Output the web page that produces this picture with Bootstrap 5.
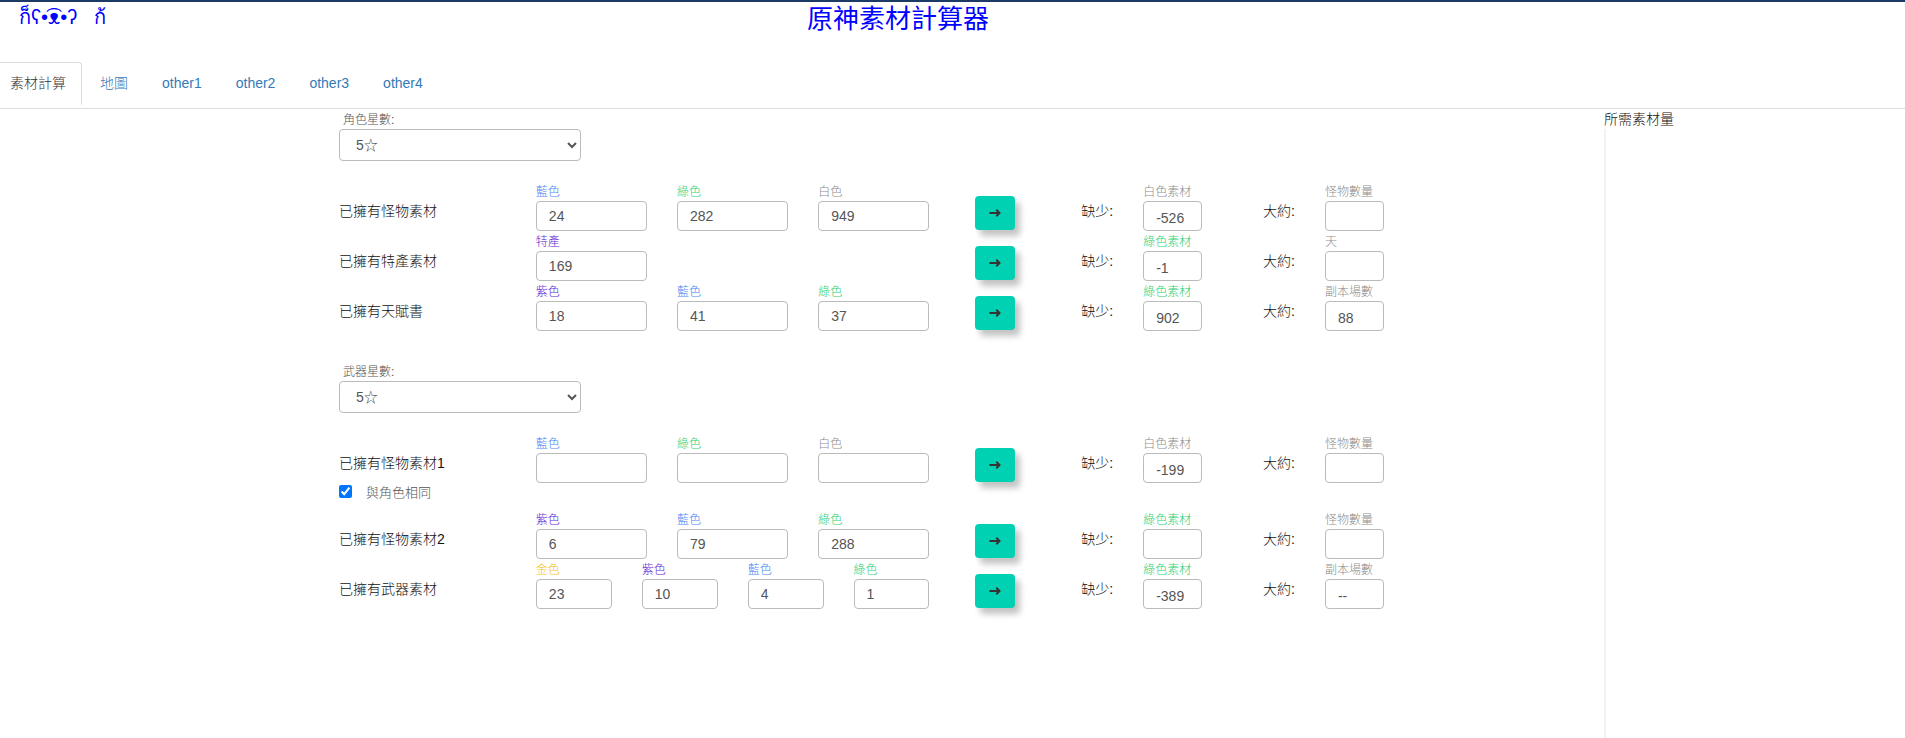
<!DOCTYPE html>
<html lang="zh-Hant">
<head>
<meta charset="utf-8">
<meta name="viewport" content="width=device-width, initial-scale=1">
<title>原神素材計算器</title>
<link href="https://cdn.jsdelivr.net/npm/bootstrap@5.3.0/dist/css/bootstrap.min.css" rel="stylesheet">
<style>
body{font-family:"Liberation Sans","Noto Sans CJK TC",sans-serif;font-size:14px;font-weight:300;line-height:20px;color:#111;border-top:2px solid #1c3a66;background:#fff}
.site-head{display:grid;grid-template-columns:807fr 1098fr;height:60px;color:#00f}
.site-head a{color:#00f;text-decoration:none;font-size:20px;font-weight:400;line-height:30px;padding-left:19px}
.site-head h1{font-size:26px;line-height:34px;margin:0}
.nav-tabs{--bs-nav-tabs-border-color:#ddd;--bs-nav-tabs-border-radius:4px;--bs-nav-tabs-link-active-color:#555;gap:2px;padding-bottom:3px}
.nav-tabs .nav-link{padding:10px 15px 11px;color:#337ab7;margin:0}
.nav-tabs .nav-link.active{color:#333;padding-left:10px;border-left:0;border-top-left-radius:0;border-color:#ddd #ddd #fff}
.layout{display:grid;grid-template-columns:1265fr 301fr;padding-left:17.8%;min-height:calc(100vh - 109px)}
.calc{width:82.6%}
.weapon{padding-top:30px}
.star-label{display:block;height:20px;font-size:12px;line-height:22px;color:#555;padding-left:4px}
.star-select{width:242px;height:32px;padding:4px 12px;font-size:14px;line-height:20px;color:#555;border:1px solid #bbb;border-radius:4px;appearance:auto;background:#fff}
.mat-row{display:grid;grid-template-columns:197fr 394fr 46fr 106fr 62fr 59fr 61fr 62fr 59fr}
.mat-row>*{min-width:0}
.caption{padding-top:20px;white-space:nowrap}
.go-cell{grid-column:4;padding-top:15px}
.fields{display:grid;grid-template-columns:repeat(3,1fr);column-gap:30px}
.fields.four{grid-template-columns:repeat(4,1fr)}
.field label{display:block;height:20px;font-size:12px;line-height:22px;white-space:nowrap}
.field .form-control{height:30px;min-height:30px;padding:0 12px;font-size:14px;line-height:20px;color:#555;border:1px solid #bbb;border-radius:4px}
.field .result{padding-top:4px;background:#fff}
.approx{grid-column:8}
.btn-go{display:flex;align-items:center;justify-content:center;width:40px;height:34px;padding:0;border:0;border-radius:4px;background:#00d1b2;box-shadow:5px 6px 6px rgba(0,0,0,.24);color:#333}
.btn-go:hover{background:#00c4a7}
.c-blue{color:#4a83f5}.c-green{color:#1fd070}.c-white{color:#8c8c8c}.c-purple{color:#5c25d8}.c-gold{color:#f2bf10}
.same-row{height:26px;font-size:13px;color:#555}
.same-row input{width:13px;height:13px;margin:2px 14px 0 0;accent-color:#0075ff}
.side-line{border-left:2px solid #f2f2f2}
</style>
</head>
<body>
<header class="site-head">
  <a href="#">ก็ʕ•͡ᴥ•ʔ&nbsp;&nbsp; ก้</a>
  <h1 class="fw-normal">原神素材計算器</h1>
</header>
<ul class="nav nav-tabs">
  <li class="nav-item"><a class="nav-link active" aria-current="page" href="#">素材計算</a></li>
  <li class="nav-item"><a class="nav-link" href="#">地圖</a></li>
  <li class="nav-item"><a class="nav-link" href="#">other1</a></li>
  <li class="nav-item"><a class="nav-link" href="#">other2</a></li>
  <li class="nav-item"><a class="nav-link" href="#">other3</a></li>
  <li class="nav-item"><a class="nav-link" href="#">other4</a></li>
</ul>
<div class="layout">
  <main class="calc">
    <section>
      <label class="star-label" for="charStar">角色星數:</label>
      <select class="star-select d-block" id="charStar"><option>5☆</option><option>4☆</option></select>
      <div class="mt-3 pt-1">
        <div class="mat-row">
          <div class="caption">已擁有怪物素材</div>
          <div class="fields">
            <div class="field"><label class="c-blue" for="a1">藍色</label><input class="form-control" id="a1" value="24"></div>
            <div class="field"><label class="c-green" for="a2">綠色</label><input class="form-control" id="a2" value="282"></div>
            <div class="field"><label class="c-white" for="a3">白色</label><input class="form-control" id="a3" value="949"></div>
          </div>
          <div class="go-cell"><button class="btn btn-go" type="button" aria-label="計算"><svg width="12" height="10" viewBox="0 0 12 10" fill="none" stroke="currentColor" stroke-width="2"><path d="M.5 5H10.500M7.300 1.800 10.500 5 7.300 8.200"/></svg></button></div>
          <div class="caption">缺少:</div>
          <div class="field"><label class="c-white" for="a4">白色素材</label><input class="form-control result" id="a4" value="-526" readonly></div>
          <div class="caption approx">大約:</div>
          <div class="field"><label class="c-white" for="a5">怪物數量</label><input class="form-control result" id="a5" readonly></div>
        </div>
        <div class="mat-row">
          <div class="caption">已擁有特產素材</div>
          <div class="fields">
            <div class="field"><label class="c-purple" for="b1">特產</label><input class="form-control" id="b1" value="169"></div>
          </div>
          <div class="go-cell"><button class="btn btn-go" type="button" aria-label="計算"><svg width="12" height="10" viewBox="0 0 12 10" fill="none" stroke="currentColor" stroke-width="2"><path d="M.5 5H10.500M7.300 1.800 10.500 5 7.300 8.200"/></svg></button></div>
          <div class="caption">缺少:</div>
          <div class="field"><label class="c-green" for="b4">綠色素材</label><input class="form-control result" id="b4" value="-1" readonly></div>
          <div class="caption approx">大約:</div>
          <div class="field"><label class="c-white" for="b5">天</label><input class="form-control result" id="b5" readonly></div>
        </div>
        <div class="mat-row">
          <div class="caption">已擁有天賦書</div>
          <div class="fields">
            <div class="field"><label class="c-purple" for="c1">紫色</label><input class="form-control" id="c1" value="18"></div>
            <div class="field"><label class="c-blue" for="c2">藍色</label><input class="form-control" id="c2" value="41"></div>
            <div class="field"><label class="c-green" for="c3">綠色</label><input class="form-control" id="c3" value="37"></div>
          </div>
          <div class="go-cell"><button class="btn btn-go" type="button" aria-label="計算"><svg width="12" height="10" viewBox="0 0 12 10" fill="none" stroke="currentColor" stroke-width="2"><path d="M.5 5H10.500M7.300 1.800 10.500 5 7.300 8.200"/></svg></button></div>
          <div class="caption">缺少:</div>
          <div class="field"><label class="c-green" for="c4">綠色素材</label><input class="form-control result" id="c4" value="902" readonly></div>
          <div class="caption approx">大約:</div>
          <div class="field"><label class="c-white" for="c5">副本場數</label><input class="form-control result" id="c5" value="88" readonly></div>
        </div>
      </div>
    </section>
    <section class="weapon">
      <label class="star-label" for="weaponStar">武器星數:</label>
      <select class="star-select d-block" id="weaponStar"><option>5☆</option><option>4☆</option></select>
      <div class="mt-3 pt-1">
        <div class="mat-row">
          <div class="caption">已擁有怪物素材1</div>
          <div class="fields">
            <div class="field"><label class="c-blue" for="d1">藍色</label><input class="form-control" id="d1"></div>
            <div class="field"><label class="c-green" for="d2">綠色</label><input class="form-control" id="d2"></div>
            <div class="field"><label class="c-white" for="d3">白色</label><input class="form-control" id="d3"></div>
          </div>
          <div class="go-cell"><button class="btn btn-go" type="button" aria-label="計算"><svg width="12" height="10" viewBox="0 0 12 10" fill="none" stroke="currentColor" stroke-width="2"><path d="M.5 5H10.500M7.300 1.800 10.500 5 7.300 8.200"/></svg></button></div>
          <div class="caption">缺少:</div>
          <div class="field"><label class="c-white" for="d4">白色素材</label><input class="form-control result" id="d4" value="-199" readonly></div>
          <div class="caption approx">大約:</div>
          <div class="field"><label class="c-white" for="d5">怪物數量</label><input class="form-control result" id="d5" readonly></div>
        </div>
        <div class="same-row d-flex align-items-start"><input type="checkbox" id="same" checked><label for="same">與角色相同</label></div>
        <div class="mat-row">
          <div class="caption">已擁有怪物素材2</div>
          <div class="fields">
            <div class="field"><label class="c-purple" for="e1">紫色</label><input class="form-control" id="e1" value="6"></div>
            <div class="field"><label class="c-blue" for="e2">藍色</label><input class="form-control" id="e2" value="79"></div>
            <div class="field"><label class="c-green" for="e3">綠色</label><input class="form-control" id="e3" value="288"></div>
          </div>
          <div class="go-cell"><button class="btn btn-go" type="button" aria-label="計算"><svg width="12" height="10" viewBox="0 0 12 10" fill="none" stroke="currentColor" stroke-width="2"><path d="M.5 5H10.500M7.300 1.800 10.500 5 7.300 8.200"/></svg></button></div>
          <div class="caption">缺少:</div>
          <div class="field"><label class="c-green" for="e4">綠色素材</label><input class="form-control result" id="e4" readonly></div>
          <div class="caption approx">大約:</div>
          <div class="field"><label class="c-white" for="e5">怪物數量</label><input class="form-control result" id="e5" readonly></div>
        </div>
        <div class="mat-row">
          <div class="caption">已擁有武器素材</div>
          <div class="fields four">
            <div class="field"><label class="c-gold" for="f1">金色</label><input class="form-control" id="f1" value="23"></div>
            <div class="field"><label class="c-purple" for="f2">紫色</label><input class="form-control" id="f2" value="10"></div>
            <div class="field"><label class="c-blue" for="f3">藍色</label><input class="form-control" id="f3" value="4"></div>
            <div class="field"><label class="c-green" for="f6">綠色</label><input class="form-control" id="f6" value="1"></div>
          </div>
          <div class="go-cell"><button class="btn btn-go" type="button" aria-label="計算"><svg width="12" height="10" viewBox="0 0 12 10" fill="none" stroke="currentColor" stroke-width="2"><path d="M.5 5H10.500M7.300 1.800 10.500 5 7.300 8.200"/></svg></button></div>
          <div class="caption">缺少:</div>
          <div class="field"><label class="c-green" for="f4">綠色素材</label><input class="form-control result" id="f4" value="-389" readonly></div>
          <div class="caption approx">大約:</div>
          <div class="field"><label class="c-white" for="f5">副本場數</label><input class="form-control result" id="f5" value="--" readonly></div>
        </div>
      </div>
    </section>
  </main>
  <aside class="d-flex flex-column">
    <div>所需素材量</div>
    <div class="side-line flex-grow-1"></div>
  </aside>
</div>
<script src="https://cdn.jsdelivr.net/npm/bootstrap@5.3.0/dist/js/bootstrap.bundle.min.js"></script>
</body>
</html>
